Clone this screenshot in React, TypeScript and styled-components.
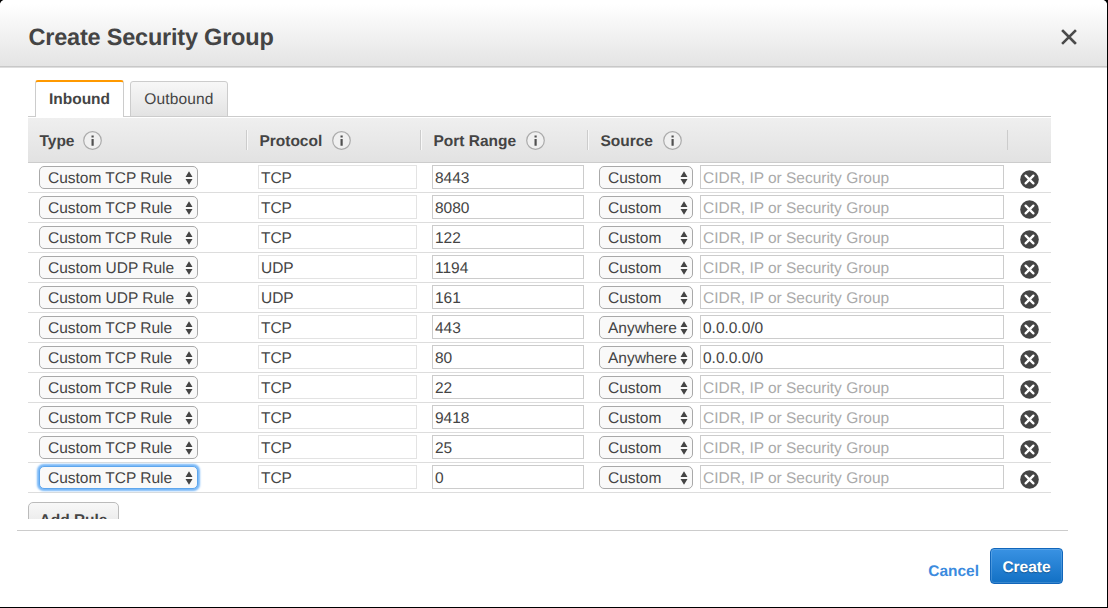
import React from 'react';
import styled, { createGlobalStyle, css } from 'styled-components';

const GlobalStyle = createGlobalStyle`
  *, *::before, *::after { box-sizing: border-box; }
  body {
    margin: 0;
    background: #000;
    font-family: "Liberation Sans", Arial, sans-serif;
    font-size: 15.5px;
    letter-spacing: -0.02px;
    color: #444;
    text-rendering: geometricPrecision;
  }
  button, input { font: inherit; color: inherit; letter-spacing: inherit; text-rendering: inherit; }
`;

const Dialog = styled.main`
  width: 1107px;
  height: 607px;
  background: #fff;
  border-radius: 5px 5px 0 0;
  overflow: hidden;
`;

const Header = styled.header`
  display: flex;
  align-items: center;
  justify-content: space-between;
  height: 68px;
  padding: 0 30px 0 28.5px;
  background: linear-gradient(#fff 0, #fff 4px, #e4e4e4 66px);
  border-bottom: 1px solid #dedede;
  box-shadow: inset 0 -1px #c8c8c8;
`;

const Title = styled.h1`
  margin: 0;
  padding-top: 6px;
  font-size: 23.5px;
  line-height: 28px;
  letter-spacing: -0.21px;
`;

const IconButton = styled.button`
  display: flex;
  padding: 0;
  border: 0;
  background: none;
`;

const CloseButton = styled(IconButton)`
  padding-top: 6px;
`;

const Body = styled.section`
  height: 451px;
  padding: 12px 0 0 28px;
  overflow: hidden;
`;

const Tabs = styled.nav`
  display: flex;
  align-items: flex-end;
  gap: 6px;
  width: 1023px;
  height: 37px;
  padding-left: 7px;
  box-shadow: inset 0 -1px #ccc;
`;

const Tab = styled.button<{ $active?: boolean }>`
  padding: 0;
  border: 1px solid #ccc;
  border-radius: 3px 3px 0 0;
  ${({ $active }) =>
    $active
      ? css`
          width: 89px;
          height: 37px;
          border-top: 2px solid #f90;
          border-bottom: 0;
          background: #fff;
          font-weight: bold;
        `
      : css`
          width: 98px;
          height: 36px;
          padding-top: 2px;
          background: linear-gradient(#f7f7f7, #e3e3e3);
          letter-spacing: 0.15px;
        `}
`;

const columns = css`
  display: grid;
  grid-template-columns: 218px 174px 167px 420px 44px;
  width: 1023px;
`;

const TableHead = styled.div`
  ${columns}
  align-items: center;
  height: 45px;
  margin-top: 1px;
  border-bottom: 1px solid #ccc;
  background: linear-gradient(#efefef, #e2e2e2);
`;

const HeadCell = styled.div<{ $first?: boolean }>`
  display: flex;
  align-items: center;
  gap: ${({ $first }) => ($first ? 9 : 10)}px;
  height: 20px;
  padding-left: ${({ $first }) => ($first ? 11.5 : 12.5)}px;
  border-left: ${({ $first }) => ($first ? 0 : '1px solid #ccc')};
  box-shadow: ${({ $first }) => ($first ? 'none' : 'inset 1px 0 #f8f8f8')};
  font-weight: bold;
  line-height: 20px;
  &:last-child { box-shadow: none; }
`;

const HeadLabel = styled.span`
  padding-top: 4px;
`;

const Row = styled.div`
  ${columns}
  height: 30px;
  border-bottom: 1px solid #ddd;
`;

const Cell = styled.div<{ $inset: number }>`
  display: flex;
  align-items: flex-start;
  gap: 7px;
  padding: 2px 0 0 ${({ $inset }) => $inset}px;
`;

const Select = styled.button<{ $width: number; $focused?: boolean }>`
  display: flex;
  align-items: center;
  justify-content: space-between;
  width: ${({ $width }) => $width}px;
  height: 23px;
  margin-top: 1px;
  padding: 2px 4px 0 8px;
  border: 1px solid ${({ $focused }) => ($focused ? '#5fa6ec' : '#a9a9a9')};
  border-radius: 5px;
  background: #f9f9f9;
  box-shadow: ${({ $focused }) => ($focused ? '0 0 2px 1.5px #78b8f8' : 'none')};
  white-space: nowrap;
  svg { margin-bottom: 2px; }
`;

const Field = styled.input<{ $width: number }>`
  width: ${({ $width }) => $width}px;
  height: 24px;
  padding: 3px 3px 0 2px;
  border: 1px solid #ccc;
  border-radius: 0;
  background: #fff;
  outline: 0;
  &:read-only { border-color: #e3e3e3; }
  &::placeholder { color: #aaa; opacity: 1; }
`;

const RemoveButton = styled(IconButton)`
  margin-top: 5px;
`;

const AddRule = styled.button`
  display: block;
  width: 91px;
  height: 34px;
  margin-top: 9px;
  padding: 3px 0 0;
  border: 1px solid #bbb;
  border-radius: 5px;
  background: linear-gradient(#f8f8f8, #e2e2e2);
  font-weight: bold;
`;

const Footer = styled.footer`
  display: flex;
  align-items: flex-start;
  justify-content: flex-end;
  gap: 11px;
  width: 1051px;
  margin: 11px 0 0 17px;
  padding: 17px 5px 0 0;
  border-top: 1px solid #ccc;
`;

const Cancel = styled.a`
  padding-top: 15px;
  color: #3b8bde;
  font-weight: bold;
  line-height: 18px;
`;

const Create = styled.button`
  width: 73px;
  height: 36px;
  padding: 3px 0 0;
  border: 1px solid #1166bb;
  border-radius: 4px;
  background: linear-gradient(#3992e3, #1270c4);
  box-shadow: inset 0 0 0 1px rgba(255, 255, 255, 0.16);
  color: #fff;
  font-weight: bold;
  text-shadow: 0 1px 1px rgba(0, 0, 0, 0.3);
`;

const InfoIcon = () => (
  <svg width="19" height="19" viewBox="0 0 19 19">
    <circle cx="9.5" cy="9.5" r="8.8" fill="#f0f0f0" stroke="#ababab" strokeWidth="1.2" />
    <path d="M8.5 4.6h2.2v2H8.5zM8.5 7.9h2.2V14.8H8.5z" fill="#505050" />
  </svg>
);

const Arrows = () => (
  <svg width="8" height="14" viewBox="0 0 8 14">
    <path d="M4 .2 7.5 6.1H.5zM4 13.8 7.5 7.9H.5z" fill="#444" />
  </svg>
);

const CloseIcon = () => (
  <svg width="16" height="16" viewBox="0 0 16 16">
    <path d="M2 2 14 14M14 2 2 14" stroke="#4b4b4b" strokeWidth="2.6" strokeLinecap="square" />
  </svg>
);

const RemoveIcon = () => (
  <svg width="19" height="19" viewBox="0 0 19 19">
    <circle cx="9.5" cy="9.5" r="9.3" fill="#444" />
    <path d="M5.6 5.6 13.4 13.4M13.4 5.6 5.6 13.4" stroke="#fff" strokeWidth="2.3" strokeLinecap="round" />
  </svg>
);

type Rule = { protocol: 'TCP' | 'UDP'; port: string; open?: boolean };

const rules: Rule[] = [
  { protocol: 'TCP', port: '8443' },
  { protocol: 'TCP', port: '8080' },
  { protocol: 'TCP', port: '122' },
  { protocol: 'UDP', port: '1194' },
  { protocol: 'UDP', port: '161' },
  { protocol: 'TCP', port: '443', open: true },
  { protocol: 'TCP', port: '80', open: true },
  { protocol: 'TCP', port: '22' },
  { protocol: 'TCP', port: '9418' },
  { protocol: 'TCP', port: '25' },
  { protocol: 'TCP', port: '0' },
];

const headings = ['Type', 'Protocol', 'Port Range', 'Source'];

export default function App() {
  return (
    <>
      <GlobalStyle />
      <Dialog>
        <Header>
          <Title>Create Security Group</Title>
          <CloseButton aria-label="Close"><CloseIcon /></CloseButton>
        </Header>
        <Body>
          <Tabs>
            <Tab $active>Inbound</Tab>
            <Tab>Outbound</Tab>
          </Tabs>
          <TableHead>
            {headings.map((heading, i) => (
              <HeadCell key={heading} $first={i === 0}>
                <HeadLabel>{heading}</HeadLabel>
                <InfoIcon />
              </HeadCell>
            ))}
            <HeadCell />
          </TableHead>
          {rules.map((rule, i) => (
            <Row key={rule.port}>
              <Cell $inset={11}>
                <Select $width={159} $focused={i === rules.length - 1}>
                  Custom {rule.protocol} Rule
                  <Arrows />
                </Select>
              </Cell>
              <Cell $inset={12}>
                <Field $width={159} value={rule.protocol} readOnly />
              </Cell>
              <Cell $inset={12}>
                <Field $width={152} defaultValue={rule.port} />
              </Cell>
              <Cell $inset={12}>
                <Select $width={94}>
                  {rule.open ? 'Anywhere' : 'Custom'}
                  <Arrows />
                </Select>
                <Field
                  $width={304}
                  defaultValue={rule.open ? '0.0.0.0/0' : ''}
                  placeholder="CIDR, IP or Security Group"
                />
              </Cell>
              <Cell $inset={13}>
                <RemoveButton aria-label="Remove rule"><RemoveIcon /></RemoveButton>
              </Cell>
            </Row>
          ))}
          <AddRule>Add Rule</AddRule>
        </Body>
        <Footer>
          <Cancel>Cancel</Cancel>
          <Create>Create</Create>
        </Footer>
      </Dialog>
    </>
  );
}
